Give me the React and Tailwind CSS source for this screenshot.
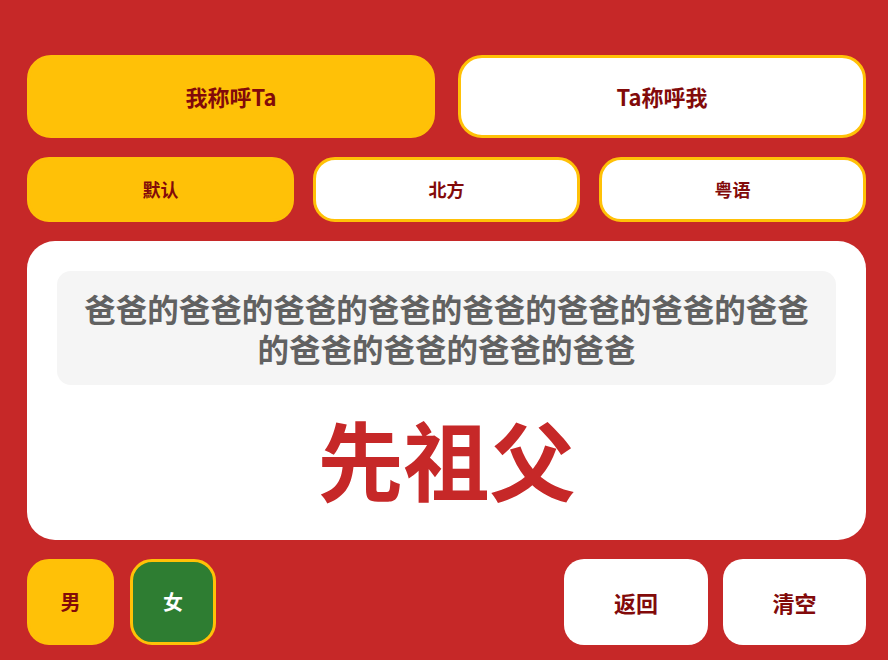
import React from "react";

const FONT = { fontFamily: '"Noto Sans CJK SC", "Noto Sans", sans-serif' };

const MODES = [
  { k: "me", label: "我称呼Ta" },
  { k: "ta", label: "Ta称呼我" },
];

const DIALECTS = [
  { k: "default", label: "默认" },
  { k: "north", label: "北方" },
  { k: "yue", label: "粤语" },
];

export default function App() {
  const [mode, setMode] = React.useState("me");
  const [dialect, setDialect] = React.useState("default");
  const [sex, setSex] = React.useState("f");

  const chain = "爸爸的".repeat(11) + "爸爸";

  return (
    <div
      className="w-[888px] h-[660px] bg-[#c62828] pl-[27px] pr-[22px] pt-[55px] flex flex-col gap-[19px] overflow-hidden"
      style={FONT}
    >
      {/* 模式 */}
      <div className="flex gap-[23px] h-[83px]">
        {MODES.map((m) => (
          <button
            key={m.k}
            onClick={() => setMode(m.k)}
            className={`flex-1 rounded-[24px] border-[3px] border-[#ffc107] text-[22px] font-bold text-[#820a0a] ${
              mode === m.k ? "bg-[#ffc107]" : "bg-white"
            }`}
          >
            {m.label}
          </button>
        ))}
      </div>

      {/* 方言 */}
      <div className="flex gap-[19px] h-[65px]">
        {DIALECTS.map((d) => (
          <button
            key={d.k}
            onClick={() => setDialect(d.k)}
            className={`flex-1 rounded-[22px] border-[3px] border-[#ffc107] text-[18px] font-bold text-[#820a0a] ${
              dialect === d.k ? "bg-[#ffc107]" : "bg-white"
            }`}
          >
            {d.label}
          </button>
        ))}
      </div>

      {/* 结果 */}
      <div className="h-[299px] bg-white rounded-[28px] px-[30px] pt-[30px] flex flex-col items-center">
        <div className="w-full bg-[#f5f5f5] rounded-[14px] px-5 py-[17px] text-center text-[31.5px] leading-[40px] font-bold text-[#616161] break-all">
          {chain}
        </div>
        <div className="mt-[30px] text-[86px] leading-none font-bold text-[#c62828]">
          先祖父
        </div>
      </div>

      {/* 底部 */}
      <div className="flex items-center h-[86px]">
        <button
          onClick={() => setSex("m")}
          className={`w-[87px] h-[86px] rounded-[22px] border-[3px] border-[#ffc107] text-[20px] font-bold ${
            sex === "m" ? "bg-[#2e7d32] text-white" : "bg-[#ffc107] text-[#820a0a]"
          }`}
        >
          男
        </button>
        <button
          onClick={() => setSex("f")}
          className={`ml-[16px] w-[86px] h-[86px] rounded-[22px] border-[3px] border-[#ffc107] text-[20px] font-bold ${
            sex === "f" ? "bg-[#2e7d32] text-white" : "bg-[#ffc107] text-[#820a0a]"
          }`}
        >
          女
        </button>
        <div className="flex-1" />
        <button className="w-[144px] h-[86px] rounded-[20px] bg-white text-[22px] font-bold text-[#820a0a]">
          返回
        </button>
        <button className="ml-[15px] w-[143px] h-[86px] rounded-[20px] bg-white text-[22px] font-bold text-[#820a0a]">
          清空
        </button>
      </div>
    </div>
  );
}
